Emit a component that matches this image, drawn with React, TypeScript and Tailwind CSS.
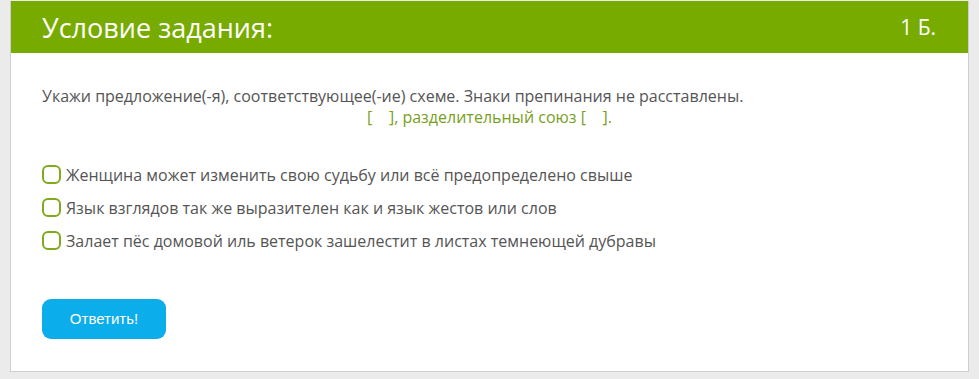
const options = [
  'Женщина может изменить свою судьбу или всё предопределено свыше',
  'Язык взглядов так же выразителен как и язык жестов или слов',
  'Залает пёс домовой иль ветерок зашелестит в листах темнеющей дубравы',
];

export default function App() {
  return (
    <div className="h-[379px] w-[979px] bg-[#ebebeb] pl-[10px] pt-px pr-[10px] font-['Open_Sans',sans-serif]">
      <div className="border border-t-0 border-[#cfcfcf] bg-white">
        <div className="flex h-[52px] items-center justify-between bg-[#78ab00] pl-[31px] pr-[32px] text-white">
          <h2 className="text-[27px] leading-none">Условие задания:</h2>
          <span className="text-[21px] leading-none">1 Б.</span>
        </div>
        <div className="px-[31px] pt-[33px] pb-[32px]">
          <p className="text-[16px] leading-[21px] text-[#555]">
            Укажи предложение(-я), соответствующее(-ие) схеме. Знаки препинания не расставлены.
          </p>
          <p className="text-center text-[16px] leading-[21px] text-[#78a01e]">
            [&nbsp;&nbsp;&nbsp;&nbsp;], разделительный союз [&nbsp;&nbsp;&nbsp;&nbsp;].
          </p>
          <div className="mt-[36px] flex flex-col gap-[12px]">
            {options.map((o) => (
              <label key={o} className="flex h-[21px] items-center gap-[5px] text-[16px] text-[#555]">
                <span className="h-[19px] w-[19px] shrink-0 rounded-[6px] border-2 border-[#7faa1c] bg-white" />
                {o}
              </label>
            ))}
          </div>
          <button className="mt-[48px] h-[40px] w-[124px] rounded-[9px] bg-[#0badeb] font-['Liberation_Sans',sans-serif] text-[15px] text-white">
            Ответить!
          </button>
        </div>
      </div>
    </div>
  );
}
